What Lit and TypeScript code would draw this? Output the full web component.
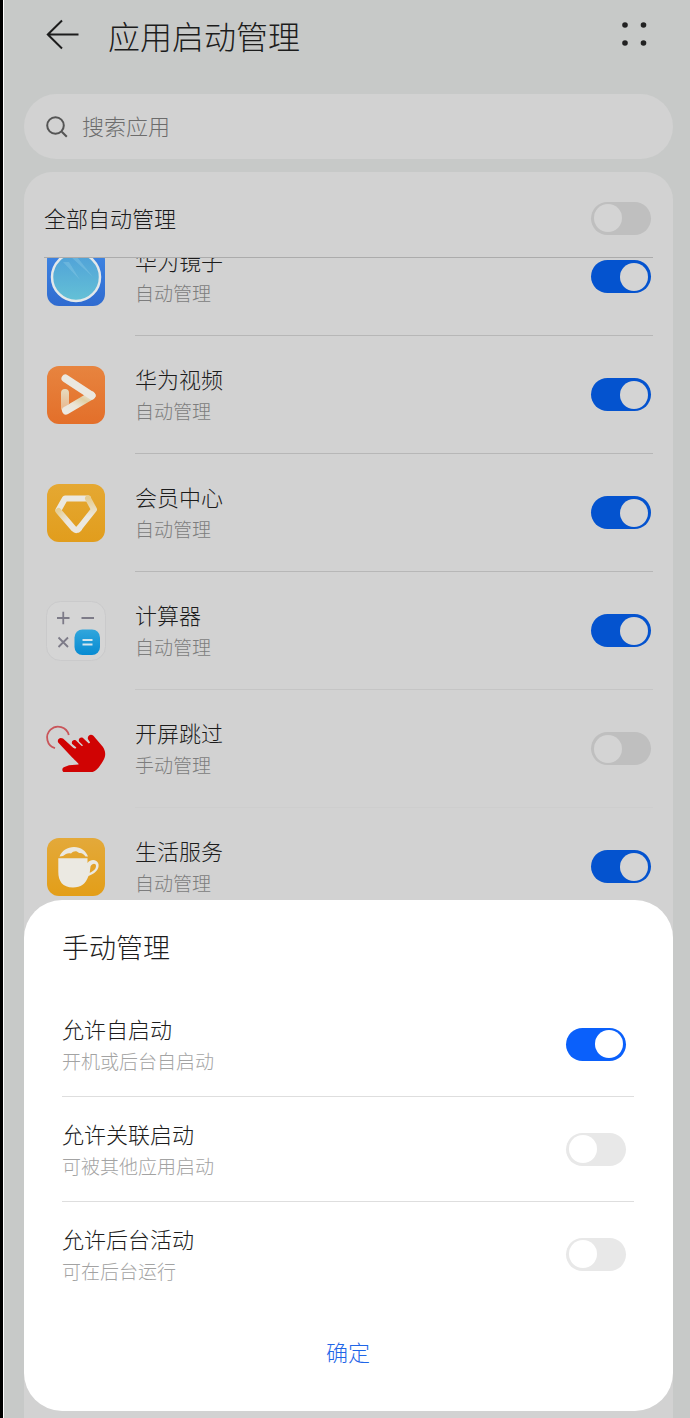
import { LitElement, html, css, svg, TemplateResult } from "lit";
import { customElement, property } from "lit/decorators.js";

interface AppEntry {
  id: string;
  name: string;
  auto: boolean;
  icon: TemplateResult;
}

interface Permission {
  id: string;
  title: string;
  note: string;
  on: boolean;
}

const mirrorIcon = svg`
  <defs>
    <linearGradient id="m-bg" x1="0" y1="0" x2="0" y2="1">
      <stop offset="0" stop-color="#3f86e4" /><stop offset="1" stop-color="#2f6bd0" />
    </linearGradient>
    <linearGradient id="m-glass" x1="0" y1="0" x2="0" y2="1">
      <stop offset="0" stop-color="#4fa0d8" /><stop offset="1" stop-color="#64c1d6" />
    </linearGradient>
  </defs>
  <rect width="58" height="58" rx="12" fill="url(#m-bg)" />
  <circle cx="29" cy="29" r="24" fill="url(#m-glass)" stroke="#e3e8ea" stroke-width="2.5" />
  <path d="M16 14L33 32L22 14Z M24 9L46 29L30 9Z" fill="#8ccbe6" opacity=".4" />`;

const videoIcon = svg`
  <defs>
    <linearGradient id="v-bg" x1="0" y1="0" x2="0" y2="1">
      <stop offset="0" stop-color="#e7843f" /><stop offset="1" stop-color="#e36f2a" />
    </linearGradient>
    <linearGradient id="v-bar" x1="0" y1="0" x2="0" y2="1">
      <stop offset="0" stop-color="#e6dcc0" /><stop offset="1" stop-color="#e9b58a" />
    </linearGradient>
    <linearGradient id="v-low" x1="0" y1="1" x2="1" y2="0">
      <stop offset="0" stop-color="#ece9e2" /><stop offset=".35" stop-color="#ebe6d9" />
      <stop offset=".7" stop-color="#e0cfa4" /><stop offset="1" stop-color="#e8e2d2" />
    </linearGradient>
  </defs>
  <rect width="58" height="58" rx="12" fill="url(#v-bg)" />
  <path d="M14 27a4 4 0 0 1 8 0V38L14 44Z" fill="url(#v-bar)" />
  <path d="M19 44.500L44.500 29.500" stroke="url(#v-low)" stroke-width="8" stroke-linecap="round" fill="none" />
  <path d="M18.500 12.500L44.500 29.500" stroke="#ebe8e0" stroke-width="8" stroke-linecap="round" fill="none" />`;

const memberIcon = svg`
  <defs>
    <linearGradient id="d-bg" x1="0" y1="0" x2="0" y2="1">
      <stop offset="0" stop-color="#e5a832" /><stop offset="1" stop-color="#e19d1d" />
    </linearGradient>
    <linearGradient id="d-side" x1="0" y1="0" x2="1" y2="1">
      <stop offset="0" stop-color="#e6cf96" /><stop offset=".5" stop-color="#ebe7df" />
    </linearGradient>
    <linearGradient id="d-right" x1="0" y1="0" x2="0" y2="1">
      <stop offset="0" stop-color="#e6cc8f" /><stop offset=".6" stop-color="#ebe8e0" />
    </linearGradient>
  </defs>
  <rect width="58" height="58" rx="12" fill="url(#d-bg)" />
  <g fill="none" stroke-width="6" stroke-linecap="round" stroke-linejoin="round">
    <path d="M11.500 26L18 14.500H41" stroke="#ebe8e0" />
    <path d="M41 14.500L47 25.500L31.500 45" stroke="url(#d-right)" />
    <path d="M11.500 27L27 45Q29.500 47.500 32 44.500" stroke="url(#d-side)" />
  </g>`;

const calculatorIcon = svg`
  <defs>
    <linearGradient id="c-eq" x1="0" y1="0" x2="0" y2="1">
      <stop offset="0" stop-color="#31a6dc" /><stop offset="1" stop-color="#078bd2" />
    </linearGradient>
  </defs>
  <rect x="-.5" y="-.5" width="59" height="59" rx="14" fill="#d5d5d5" stroke="#cacacb" />
  <path d="M10 16H22.500M16.250 9.750V22.250M34.500 16H47M11.500 35.500L21 45M21 35.500L11.500 45" stroke="#7d7b88" stroke-width="1.800" fill="none" />
  <rect x="27.500" y="27.500" width="25.500" height="25.500" rx="8" fill="url(#c-eq)" />
  <path d="M35.500 38H45.500M35.500 42.500H45.500" stroke="#d5e6ee" stroke-width="1.800" />`;

const tapIcon = svg`
  <path d="M8 28.200A11 11 0 1 1 21.800 15" fill="none" stroke="#c9555a" stroke-width="1.800" />
  <path d="M11.400 22.800C9.400 19.800 12.800 16.400 16 18.600L26.200 27.800L28.200 28.800L29.400 27.600L25.200 24
    C23.800 21.600 26.600 19 29 20.600L34.600 26L36.200 25.400L32 21.400C31 18.800 33.600 16.600 36 18L41.800 23.400
    L43.200 22.600L41 19.200C39.800 15.400 44 13.200 46.400 15.800L55.600 26.400C58.800 30.800 59.200 36 56 41
    C53.600 44.600 51 50.200 45.600 52H16.600C14.800 51 15 48 16.800 47.200L22 45.200L31.600 44.600C32 43.200 27.600 40 25.200 37.400Z" fill="#d00303" />`;

const cupIcon = svg`
  <defs>
    <linearGradient id="s-bg" x1="0" y1="0" x2="0" y2="1">
      <stop offset="0" stop-color="#e3a93a" /><stop offset="1" stop-color="#e39e18" />
    </linearGradient>
  </defs>
  <rect width="58" height="58" rx="12" fill="url(#s-bg)" />
  <path d="M12.500 18.500C15 12.500 20.500 9 27 9C34 9 39 13 41 18.500H38.500C36.500 16 35 14.500 32 15C29.500 12.500 26.500 13 24 15.500
    C21 14.500 18.500 16 16 18Z" fill="#ebe8e0" />
  <path d="M11.300 20.300H40.500V25C44 20.500 50 21.500 51.500 26C52.500 32 47.500 35.500 41.500 38C38.500 46 34 49.500 26 49.500
    C15.500 49.500 11.300 43 11.300 34Z" fill="#ebe9e2" />
  <path d="M43.500 28.500C45 25 49 24.700 49 28C49 31 46 33.500 42.700 34.800Z" fill="#e3a22a" />`;

const apps: AppEntry[] = [
  { id: "mirror", name: "华为镜子", auto: true, icon: mirrorIcon },
  { id: "video", name: "华为视频", auto: true, icon: videoIcon },
  { id: "member", name: "会员中心", auto: true, icon: memberIcon },
  { id: "calculator", name: "计算器", auto: true, icon: calculatorIcon },
  { id: "skip", name: "开屏跳过", auto: false, icon: tapIcon },
  { id: "life", name: "生活服务", auto: true, icon: cupIcon },
];

const permissions: Permission[] = [
  { id: "self", title: "允许自启动", note: "开机或后台自启动", on: true },
  { id: "linked", title: "允许关联启动", note: "可被其他应用启动", on: false },
  { id: "background", title: "允许后台活动", note: "可在后台运行", on: false },
];

@customElement("app-root")
export class AppRoot extends LitElement {
  @property({ attribute: false }) apps = apps;
  @property({ attribute: false }) permissions = permissions;

  static styles = css`
    :host {
      --panel: #d2d2d2;
      --track-on: #0453cf;
      --track-off: #bfbfbf;
      --knob: #d4d4d4;
      display: block;
      font-family: "Noto Sans CJK SC", sans-serif;
      font-weight: 300;
      color: #1c1c1c;
    }
    * {
      box-sizing: border-box;
      margin: 0;
    }
    button,
    input {
      font: inherit;
      border: 0;
      padding: 0;
      background: none;
    }
    .screen {
      position: relative;
      height: 100vh;
      overflow: hidden;
      display: flex;
      flex-direction: column;
      padding: 0 17px 0 20px;
      background: #c7c9c8;
      border-left: 1px solid #fff;
    }
    .edge {
      border-left: 3px solid #000;
    }
    .bar {
      flex: none;
      display: flex;
      align-items: center;
      height: 70px;
      margin-bottom: 24px;
      padding: 0 24px 0 22px;
    }
    .bar h1 {
      flex: 1;
      margin-left: 28px;
      font-size: 32px;
      line-height: 48px;
      font-weight: 300;
    }
    .icon-button {
      display: flex;
      cursor: pointer;
    }
    .search {
      flex: none;
      display: flex;
      align-items: center;
      gap: 14px;
      height: 65px;
      margin-bottom: 13px;
      padding: 0 22px;
      border-radius: 33px;
      background: var(--panel);
    }
    .search input {
      flex: 1;
      min-width: 0;
      padding-bottom: 3px;
      font-size: 22px;
      line-height: 32px;
      outline: none;
    }
    .search input::placeholder {
      color: #6c6c6c;
      opacity: 1;
    }
    .panel {
      flex: 1;
      min-height: 0;
      display: flex;
      flex-direction: column;
      border-radius: 28px 28px 0 0;
      background: var(--panel);
    }
    .all {
      flex: none;
      display: flex;
      align-items: center;
      justify-content: space-between;
      height: 86px;
      margin: 0 20px;
      padding: 7px 2px 0 0;
      border-bottom: 1px solid #acacac;
      font-size: 22px;
      line-height: 32px;
    }
    .all label {
      padding-bottom: 3px;
    }
    .viewport {
      flex: 1;
      min-height: 0;
      overflow: hidden;
    }
    .apps {
      list-style: none;
      padding: 0;
      margin-top: -40px;
    }
    .app {
      display: flex;
      align-items: center;
      gap: 30px;
      height: 118px;
      padding: 0 20px 0 23px;
    }
    .app-icon {
      flex: none;
      display: block;
      width: 58px;
      height: 58px;
      overflow: visible;
    }
    .app-body {
      flex: 1;
      display: flex;
      align-items: center;
      justify-content: space-between;
      height: 118px;
      padding-right: 2px;
      border-bottom: 1px solid #b7b7b7;
    }
    .app:nth-child(4) .app-body {
      border-color: #c5c5c5;
    }
    .app:nth-child(5) .app-body {
      border-color: #cecece;
    }
    .app:last-child .app-body {
      border-color: transparent;
    }
    .label {
      display: flex;
      flex-direction: column;
      gap: 2px;
    }
    .app .label {
      padding-bottom: 2px;
    }
    .title {
      font-size: 22px;
      line-height: 32px;
    }
    .note {
      font-size: 19px;
      line-height: 30px;
      color: #7d7d7d;
    }
    .switch {
      appearance: none;
      flex: none;
      display: flex;
      align-items: center;
      width: 60px;
      height: 33px;
      padding: 0 3px;
      border-radius: 17px;
      background: var(--track-off);
      cursor: pointer;
    }
    .switch::before {
      content: "";
      width: 28px;
      height: 28px;
      border-radius: 50%;
      background: var(--knob);
    }
    .switch:checked {
      justify-content: flex-end;
      background: var(--track-on);
    }
    .sheet {
      --track-on: #0a60fb;
      --track-off: #e8e8e8;
      --knob: #fff;
      position: absolute;
      left: 20px;
      right: 17px;
      bottom: 7px;
      padding: 27px 39px 38px 38px;
      border-radius: 38px;
      background: #fff;
    }
    .sheet h2 {
      margin-bottom: 25px;
      font-size: 27px;
      line-height: 40px;
      font-weight: 300;
    }
    .permission {
      display: flex;
      align-items: center;
      justify-content: space-between;
      height: 105px;
      padding-right: 8px;
      border-bottom: 1px solid #dedede;
    }
    .permission:last-of-type {
      border-color: transparent;
    }
    .permission .note {
      color: #a3a3a3;
    }
    .confirm {
      display: block;
      width: 100%;
      margin-top: 22px;
      font-size: 22px;
      line-height: 44px;
      color: #1f66e8;
      cursor: pointer;
    }
  `;

  private renderSwitch(id: string, on: boolean) {
    return html`<input class="switch" type="checkbox" role="switch" id=${id} ?checked=${on} />`;
  }

  private renderApp(app: AppEntry) {
    return html`
      <li class="app">
        <svg class="app-icon" viewBox="0 0 58 58" aria-hidden="true">${app.icon}</svg>
        <div class="app-body">
          <label class="label" for=${app.id}>
            <span class="title">${app.name}</span>
            <span class="note">${app.auto ? "自动管理" : "手动管理"}</span>
          </label>
          ${this.renderSwitch(app.id, app.auto)}
        </div>
      </li>
    `;
  }

  private renderPermission(item: Permission) {
    return html`
      <div class="permission">
        <label class="label" for=${item.id}>
          <span class="title">${item.title}</span>
          <span class="note">${item.note}</span>
        </label>
        ${this.renderSwitch(item.id, item.on)}
      </div>
    `;
  }

  render() {
    return html`
      <div class="edge">
        <main class="screen">
          <header class="bar">
            <button class="icon-button" type="button">
              <svg width="34" height="34" viewBox="0 0 34 34" fill="none" stroke="#1c1c1c" stroke-width="2">
                <path d="M16 2.500L1.800 16.500L16 30.500M2 16.500H32.500" />
              </svg>
            </button>
            <h1>应用启动管理</h1>
            <button class="icon-button" type="button">
              <svg width="28" height="28" viewBox="0 0 28 28" fill="#222">
                <circle cx="4" cy="4" r="2.800" /><circle cx="22.500" cy="4" r="2.800" />
                <circle cx="4" cy="22" r="2.800" /><circle cx="22.500" cy="22" r="2.800" />
              </svg>
            </button>
          </header>
          <label class="search">
            <svg width="22" height="22" viewBox="0 0 22 22" fill="none" stroke="#555" stroke-width="2">
              <circle cx="9.500" cy="9.500" r="8.300" /><path d="M15.800 15.800L20.800 20.800" />
            </svg>
            <input type="search" placeholder="搜索应用" />
          </label>
          <section class="panel">
            <div class="all">
              <label for="all">全部自动管理</label>
              ${this.renderSwitch("all", false)}
            </div>
            <div class="viewport">
              <ul class="apps">
                ${this.apps.map((app) => this.renderApp(app))}
              </ul>
            </div>
          </section>
          <section class="sheet" role="dialog" aria-labelledby="sheet-title">
            <h2 id="sheet-title">手动管理</h2>
            ${this.permissions.map((item) => this.renderPermission(item))}
            <button class="confirm" type="button">确定</button>
          </section>
        </main>
      </div>
    `;
  }
}
